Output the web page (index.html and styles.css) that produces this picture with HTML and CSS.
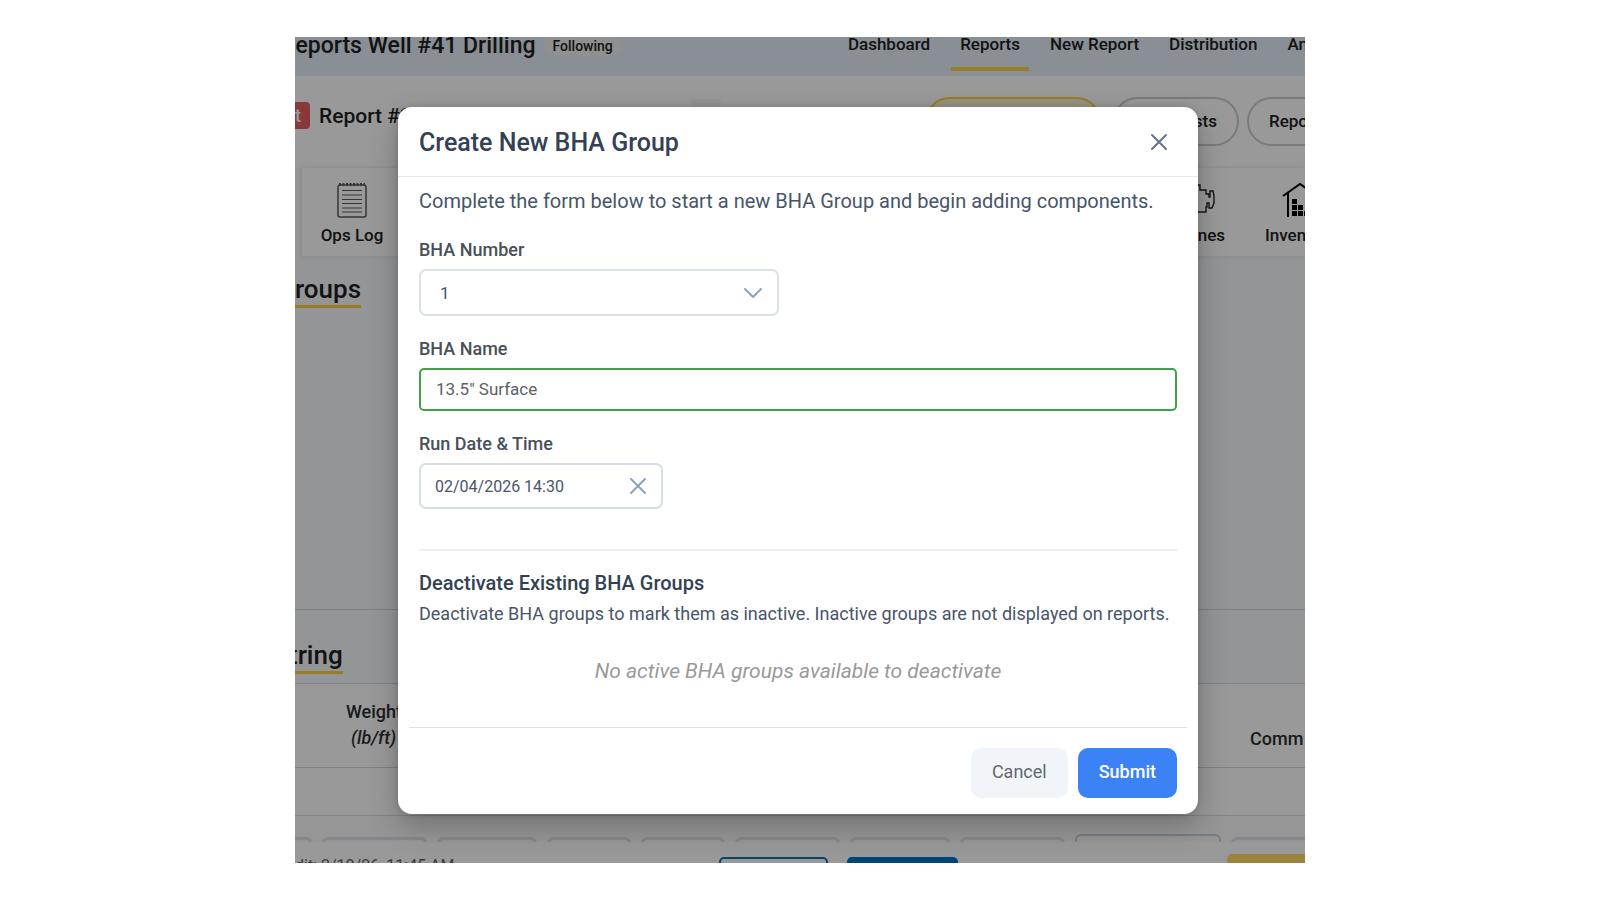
FILE: index.html
```html
<!DOCTYPE html>
<html lang="en">
<head>
<meta charset="utf-8">
<title>Create New BHA Group</title>
<link rel="stylesheet" href="styles.css">
</head>
<body>
<div class="stage">
  <div class="app">
    <header class="topbar">
      <div class="well"><h1 class="well-name">Reports Well #41 Drilling</h1><span class="chip">Following</span></div>
      <nav class="nav">
        <a href="#">Dashboard</a><a href="#" class="active">Reports</a><a href="#">New Report</a><a href="#">Distribution</a><a href="#">An</a>
      </nav>
    </header>
    <section class="reportbar">
      <div class="report"><span class="badge">t</span><h2 class="report-name">Report #2</h2></div>
      <span class="stub"></span>
      <div class="pills">
        <button class="pill pill-on" type="button" aria-label="Daily report"></button>
        <button class="pill pill-costs" type="button">sts</button>
        <button class="pill pill-last" type="button">Repo</button>
      </div>
    </section>
    <section class="tools">
      <div class="toolcard">
        <a href="#" class="tool">
          <svg width="30" height="36" viewBox="0 0 30 36" fill="none" stroke="#5a5a5a" aria-hidden="true"><rect x="1" y="3" width="28" height="32" rx="2" stroke-width="1.5"/><path d="M2 2.500H28" stroke-width="3" stroke-dasharray="2 1.500"/><path d="M5 8.500H25M5 13H25M5 17.500H25M5 21.500H25M5 26H25M5 30H25" stroke-width="1.200"/></svg>
          <span>Ops Log</span>
        </a>
        <div class="tools-end">
          <a href="#" class="tool tool-engines">
            <svg width="30" height="36" viewBox="0 0 30 36" fill="none" stroke="#222" stroke-width="1.400" aria-hidden="true"><path d="M4 3H15V8H21V12H24V15H25V9H28L29 14V21L27 26H24V21H22V25H21V30H4Z"/></svg>
            <span>nes</span>
          </a>
          <a href="#" class="tool tool-inventory">
            <svg width="36" height="36" viewBox="0 0 36 36" aria-hidden="true"><path d="M1 14L18 2L35 14M6 11V35M30 11V35" fill="none" stroke="#000" stroke-width="2"/><path d="M10 17h5v5h-5zM10 23h5v5h-5zM16 23h5v5h-5zM10 29h5v5h-5zM16 29h5v5h-5zM22 29h5v5h-5z"/></svg>
            <span>Inven</span>
          </a>
        </div>
      </div>
    </section>
    <section class="groups"><h2 class="heading">roups</h2></section>
    <section class="string"><h2 class="heading">tring</h2></section>
    <table class="grid">
      <thead><tr><th class="col-weight">Weight<br><em>(lb/ft)</em></th><th class="col-comm">Comm</th></tr></thead>
      <tbody><tr><td></td><td></td></tr></tbody>
    </table>
    <div class="tabs"><i class="t1"></i><i class="t2"></i><i class="t3"></i><i class="t4"></i><i class="t4"></i><i class="t2"></i><i class="t3"></i><i class="t2"></i><i class="t5"></i><i class="t6"></i></div>
    <footer class="footer">
      <span class="edit">dit: 2/10/26, 11:45 AM</span>
      <button class="fbtn outline" type="button" aria-label="Preview"></button>
      <button class="fbtn solid" type="button" aria-label="Save"></button>
      <button class="fbtn gold" type="button" aria-label="Finish"></button>
    </footer>
  </div>
  <div class="overlay">
    <form class="modal" role="dialog" aria-labelledby="dlg-title">
      <div class="modal-head">
        <h2 id="dlg-title">Create New BHA Group</h2>
        <button class="icon-btn" type="button" aria-label="Close"><svg width="18" height="18" viewBox="0 0 18 18" fill="none" stroke="#64748b" stroke-width="2" stroke-linecap="round"><path d="M2 2L16 16M16 2L2 16"/></svg></button>
      </div>
      <div class="modal-body">
        <p class="lead">Complete the form below to start a new BHA Group and begin adding components.</p>
        <label class="label" for="num">BHA Number</label>
        <div class="select">
          <select id="num"><option>1</option></select>
          <svg width="18" height="12" viewBox="0 0 18 12" fill="none" stroke="#8fa1b9" stroke-width="2" stroke-linecap="round" stroke-linejoin="round" aria-hidden="true"><path d="M1 2L9 10L17 2"/></svg>
        </div>
        <label class="label" for="name">BHA Name</label>
        <input class="name" id="name" type="text" value="13.5&quot; Surface">
        <label class="label" for="date">Run Date &amp; Time</label>
        <div class="date">
          <input id="date" type="text" value="02/04/2026 14:30">
          <button class="icon-btn" type="button" aria-label="Clear date"><svg width="18" height="18" viewBox="0 0 18 18" fill="none" stroke="#8fa1b9" stroke-width="2" stroke-linecap="round"><path d="M2 2L16 16M16 2L2 16"/></svg></button>
        </div>
        <div class="deactivate">
          <h3>Deactivate Existing BHA Groups</h3>
          <p class="hint">Deactivate BHA groups to mark them as inactive. Inactive groups are not displayed on reports.</p>
          <p class="empty">No active BHA groups available to deactivate</p>
        </div>
      </div>
      <div class="modal-foot">
        <button class="btn cancel" type="button">Cancel</button>
        <button class="btn submit" type="submit">Submit</button>
      </div>
    </form>
  </div>
</div>
</body>
</html>
```
FILE: styles.css
```css
* { box-sizing: border-box; }
body { margin: 0; background: #fff; font-family: Roboto, "Liberation Sans", sans-serif; color: #212121; }
h1, h2, h3, p { margin: 0; }
button, input, select { font: inherit; color: inherit; margin: 0; }
a { color: inherit; text-decoration: none; }
svg { display: block; flex: none; }

.stage { position: relative; overflow: hidden; margin: 37px 295px 0; height: calc(100vh - 74px); }
.app { height: 100%; display: flex; flex-direction: column; overflow: hidden; background: #f5f8fb; }
.app > * { flex: none; }

.topbar { display: flex; justify-content: space-between; height: 39px; background: #e4eef8; overflow: hidden; }
.well { display: flex; align-items: center; gap: 8px; height: 18px; margin-left: -14px; white-space: nowrap; }
.well-name { font-size: 23px; line-height: 28px; font-weight: 500; }
.chip { padding: 0 9px; border-radius: 10px; background: #f0f0f0; font-size: 14px; line-height: 20px; font-weight: 500; }
.nav { display: flex; gap: 12px; margin-right: -12px; white-space: nowrap; }
.nav a { height: 34px; padding: 0 9px; font-size: 17px; line-height: 15px; font-weight: 500; }
.nav .active { border-bottom: 4px solid #ffcf40; }

.reportbar { display: flex; justify-content: space-between; height: 92px; background: #fff; }
.report { display: flex; align-items: center; gap: 9px; height: 27px; margin-top: 26px; }
.badge { width: 15px; border-radius: 0 4px 4px 0; background: #e35d62; color: #fff; font-size: 18px; line-height: 27px; font-weight: 500; }
.report-name { padding-top: 2px; font-size: 21px; line-height: 27px; font-weight: 500; }
.stub { width: 30px; height: 30px; margin: 23px 0 0 76px; background: #f7f7f7; }
.pills { display: flex; gap: 8px; margin: 21px -30px 0 0; }
.pill { height: 49px; border: 2px solid #ccc; border-radius: 25px; background: none; padding: 0 20px 2px; font-size: 17px; font-weight: 500; }
.pill-on { width: 176px; border-color: #ffcf40; background: #fff5d6; margin-right: 4px; }
.pill-costs { width: 126px; text-align: right; }
.pill-last { width: 88px; text-align: left; }

.tools { padding-left: 7px; }
.toolcard { display: flex; justify-content: space-between; height: 88px; padding-top: 14px; background: #fff; box-shadow: 0 0 4px #ddd; }
.tool { display: flex; flex-direction: column; align-items: center; gap: 7px; width: 100px; font-size: 17px; line-height: 20px; font-weight: 500; }
.tools-end { display: flex; gap: 40px; margin-right: -16px; }
.tool-engines, .tool-inventory { width: 56px; }
.tool-engines { align-items: flex-end; }
.tool-engines svg { margin-right: 10px; }
.tool-inventory { align-items: flex-start; }
.tool-inventory svg { margin-left: 17px; }

.heading { display: inline-block; border-bottom: 3px solid #ffcf40; font-size: 26px; line-height: 31px; font-weight: 500; }
.groups { height: 354px; padding-top: 18px; border-bottom: 1px solid #ccd6e0; }
.string { height: 74px; padding-top: 30px; border-bottom: 1px solid #ccd6e0; }
.string .heading { margin-left: -6px; }
.grid { width: 100%; border-collapse: collapse; background: #fff; table-layout: fixed; }
.grid th { height: 83px; padding: 0 0 0 51px; border-bottom: 1px solid #ccd6e0; font-size: 18px; line-height: 26px; font-weight: 500; text-align: left; vertical-align: middle; color: #2b2e32; }
.grid em { padding-left: 5px; }
.grid .col-comm { width: 55px; padding: 27px 0 0; }
.grid td { height: 48px; border-bottom: 1px solid #d8dde2; }
.tabs { display: flex; gap: 10px; height: 26px; padding-top: 21px; background: #fbfbfb; overflow: hidden; }
.tabs i { flex: none; height: 20px; border: 3px solid #dde3e9; border-radius: 6px; }
.tabs .t1 { width: 17px; border-left: 0; border-radius: 0 6px 0 0; }
.tabs .t2 { width: 105px; }
.tabs .t3 { width: 100px; }
.tabs .t4 { width: 84px; }
.tabs .t5 { width: 146px; margin-top: -3px; border: 2px solid #c5d0da; }
.tabs .t6 { width: 100px; }
.footer { display: flex; align-items: flex-start; height: 40px; padding-top: 15px; background: #fff; }
.edit { width: 424px; color: #666; font-size: 16px; line-height: 18px; }
.fbtn { width: 109px; height: 40px; border: 0; border-radius: 5px; }
.outline { border: 2px solid #0a70b8; background: #fff; margin-right: 19px; }
.solid { width: 111px; background: #0075c4; }
.gold { width: 90px; margin: -3px -12px 0 auto; background: #ffda66; }

.overlay { position: absolute; inset: 0; display: flex; justify-content: center; align-items: flex-start; padding: 70px 107px 0 103px; background: rgba(0, 0, 0, .4); }
.modal { width: 100%; border-radius: 14px; background: #fff; box-shadow: 0 12px 30px rgba(0, 0, 0, .25), 0 0 6px rgba(0, 0, 0, .15); color: #475569; }
.modal-head { display: flex; justify-content: space-between; align-items: center; height: 70px; padding: 0 28px 0 21px; border-bottom: 1px solid #e2e8f0; }
.modal-head h2 { padding-top: 2px; font-size: 25px; line-height: 32px; font-weight: 500; color: #334155; }
.icon-btn { display: flex; padding: 2px; border: 0; background: none; }
.modal-body { padding: 10px 21px 0; }
.lead { font-size: 20px; line-height: 28px; }
.label { display: block; width: fit-content; margin: 23px 0 9px; font-size: 18px; line-height: 20px; font-weight: 500; color: #495057; }
.lead + .label { margin-top: 25px; }
.select { position: relative; width: 360px; }
.select select { appearance: none; width: 100%; height: 47px; padding: 0 19px; border: 2px solid #dae1e7; border-radius: 7px; background: #fff; font-size: 17px; }
.select svg { position: absolute; right: 17px; top: 18px; pointer-events: none; }
.name { display: block; width: 100%; height: 43px; padding: 0 15px 2px; border: 2px solid #43a047; border-radius: 5px; font-size: 17px; color: #5c6166; }
.date { display: flex; align-items: center; width: 244px; height: 46px; padding: 0 12px 0 14px; border: 2px solid #d5deea; border-radius: 7px; }
.date input { flex: 1; min-width: 0; padding: 0; border: 0; outline: 0; font-size: 16px; }
.deactivate { margin-top: 40px; padding-top: 19px; border-top: 2px solid #eceef0; }
.deactivate h3 { font-size: 20px; line-height: 26px; font-weight: 500; color: #334155; }
.hint { margin-top: 4px; font-size: 18px; line-height: 28px; }
.empty { padding: 28px 0 41px; text-align: center; font-size: 21px; line-height: 30px; font-style: italic; color: #999; }
.modal-foot { display: flex; justify-content: flex-end; gap: 10px; margin: 0 11px; padding: 20px 10px 16px; border-top: 1px solid #dfe3e8; }
.btn { height: 50px; padding: 0 21px 3px; border: 0; border-radius: 10px; font-size: 18px; }
.cancel { background: #f1f5f9; color: #64686e; }
.submit { background: #3b82f6; color: #fff; font-weight: 500; }
```
